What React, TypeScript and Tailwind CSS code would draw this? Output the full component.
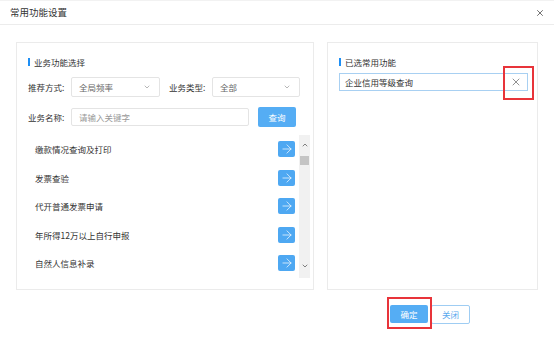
import React from 'react';
import { ChevronDown, ChevronUp, X, ArrowRight } from 'lucide-react';

const font = { fontFamily: '"Noto Sans CJK SC", "Noto Sans", sans-serif' };

const items = ['缴款情况查询及打印', '发票查验', '代开普通发票申请', '年所得12万以上自行申报', '自然人信息补录'];

// Section heading with the blue marker bar
const SectionTitle = ({ label }: { label: string }) => (
  <div className="flex items-center h-[10px]">
    <span className="w-[2px] h-[8px] bg-[#1e8ff5]" />
    <span className="ml-[4px] text-[8.5px] leading-none text-[#333]">{label}</span>
  </div>
);

const Select = ({ value, w }: { value: string; w: string }) => (
  <div className={`${w} h-[20px] border border-[#e4e4e4] rounded-[2px] flex items-center justify-between pl-[7px] pr-[8px]`}>
    <span className="text-[8.5px] text-[#666] leading-none">{value}</span>
    <ChevronDown size={8} strokeWidth={1.6} className="text-[#777]" />
  </div>
);

export default function App() {
  return (
    <div style={font} className="w-[554px] h-[355px] bg-white overflow-hidden">
      {/* Header */}
      <div className="h-[25px] border-t border-t-[#f2f2f2] border-b border-b-[#ececec] flex items-center justify-between pl-[10px] pr-[9px]">
        <span className="text-[9.5px] text-[#333] leading-none">常用功能设置</span>
        <X size={10} strokeWidth={2} className="text-[#555]" />
      </div>

      {/* Body */}
      <div className="flex gap-[13px] px-[16px] pt-[17px]">
        {/* Left panel */}
        <div className="w-[298px] h-[248px] border border-[#ebebeb] pl-[11px] pr-[3px] pt-[14px]">
          <SectionTitle label="业务功能选择" />
          <div className="flex items-center mt-[10px] h-[20px]">
            <span className="w-[43px] text-[8.5px] text-[#333] leading-none">推荐方式:</span>
            <Select value="全局频率" w="w-[89px]" />
            <span className="ml-[9px] w-[43px] text-[8.5px] text-[#333] leading-none">业务类型:</span>
            <Select value="全部" w="w-[88px]" />
          </div>
          <div className="flex items-center mt-[10px] h-[20px]">
            <span className="w-[43px] text-[8.5px] text-[#333] leading-none">业务名称:</span>
            <div className="w-[178px] h-[18px] border border-[#e4e4e4] rounded-[2px] flex items-center pl-[7px]">
              <span className="text-[8.5px] text-[#999] leading-none">请输入关键字</span>
            </div>
            <button className="ml-[9px] w-[38px] h-[20px] bg-[#55adf4] rounded-[2px] text-white text-[8.5px] leading-none">查询</button>
          </div>

          {/* List */}
          <div className="flex mt-[8px] h-[143px]">
            <div className="flex-1 flex flex-col">
              {items.map(t => (
                <div key={t} className="h-[28.5px] flex items-center justify-between pl-[7px]">
                  <span className="text-[8.5px] text-[#333] leading-none">{t}</span>
                  <span className="w-[17px] h-[16px] bg-[#4ea8f2] rounded-[2px] flex items-center justify-center">
                    <ArrowRight size={14} strokeWidth={1.2} className="text-white" />
                  </span>
                </div>
              ))}
            </div>
            <div className="ml-[4px] w-[11px] h-full bg-[#f1f1f1] flex flex-col items-center">
              <ChevronUp size={8} strokeWidth={2.2} className="text-[#555] mt-[6px]" />
              <div className="w-[9px] h-[9px] bg-[#c4c4c4] mt-[7px]" />
              <div className="flex-1" />
              <ChevronDown size={8} strokeWidth={2.2} className="text-[#555] mb-[8px]" />
            </div>
          </div>
        </div>

        {/* Right panel */}
        <div className="w-[211px] h-[248px] border border-[#ebebeb] pl-[11px] pr-[9px] pt-[14px]">
          <SectionTitle label="已选常用功能" />
          <div className="relative mt-[6px] h-[18px] border border-[#a8d0f2] flex items-center justify-between pl-[5px] pr-[5px]">
            <span className="text-[8.5px] text-[#333] leading-none">企业信用等级查询</span>
            <X size={12} strokeWidth={1.3} className="text-[#555]" />
            <div className="absolute left-[163px] top-[-8px] w-[31px] h-[34px] border-2 border-[#e8343a]" />
          </div>
        </div>
      </div>

      {/* Footer */}
      <div className="flex items-start gap-[3px] pl-[390px] pt-[15px]">
        <div className="relative flex">
          <button className="w-[38px] h-[18px] bg-[#55adf4] rounded-[2px] text-white text-[8.5px] leading-none">确定</button>
          <div className="absolute left-[-3px] top-[-8px] w-[45px] h-[32px] border-2 border-[#e8343a]" />
        </div>
        <button className="w-[39px] h-[19px] border border-[#9fcdf3] rounded-[2px] text-[#5aa9ee] text-[8.5px] leading-none bg-white">关闭</button>
      </div>
    </div>
  );
}
